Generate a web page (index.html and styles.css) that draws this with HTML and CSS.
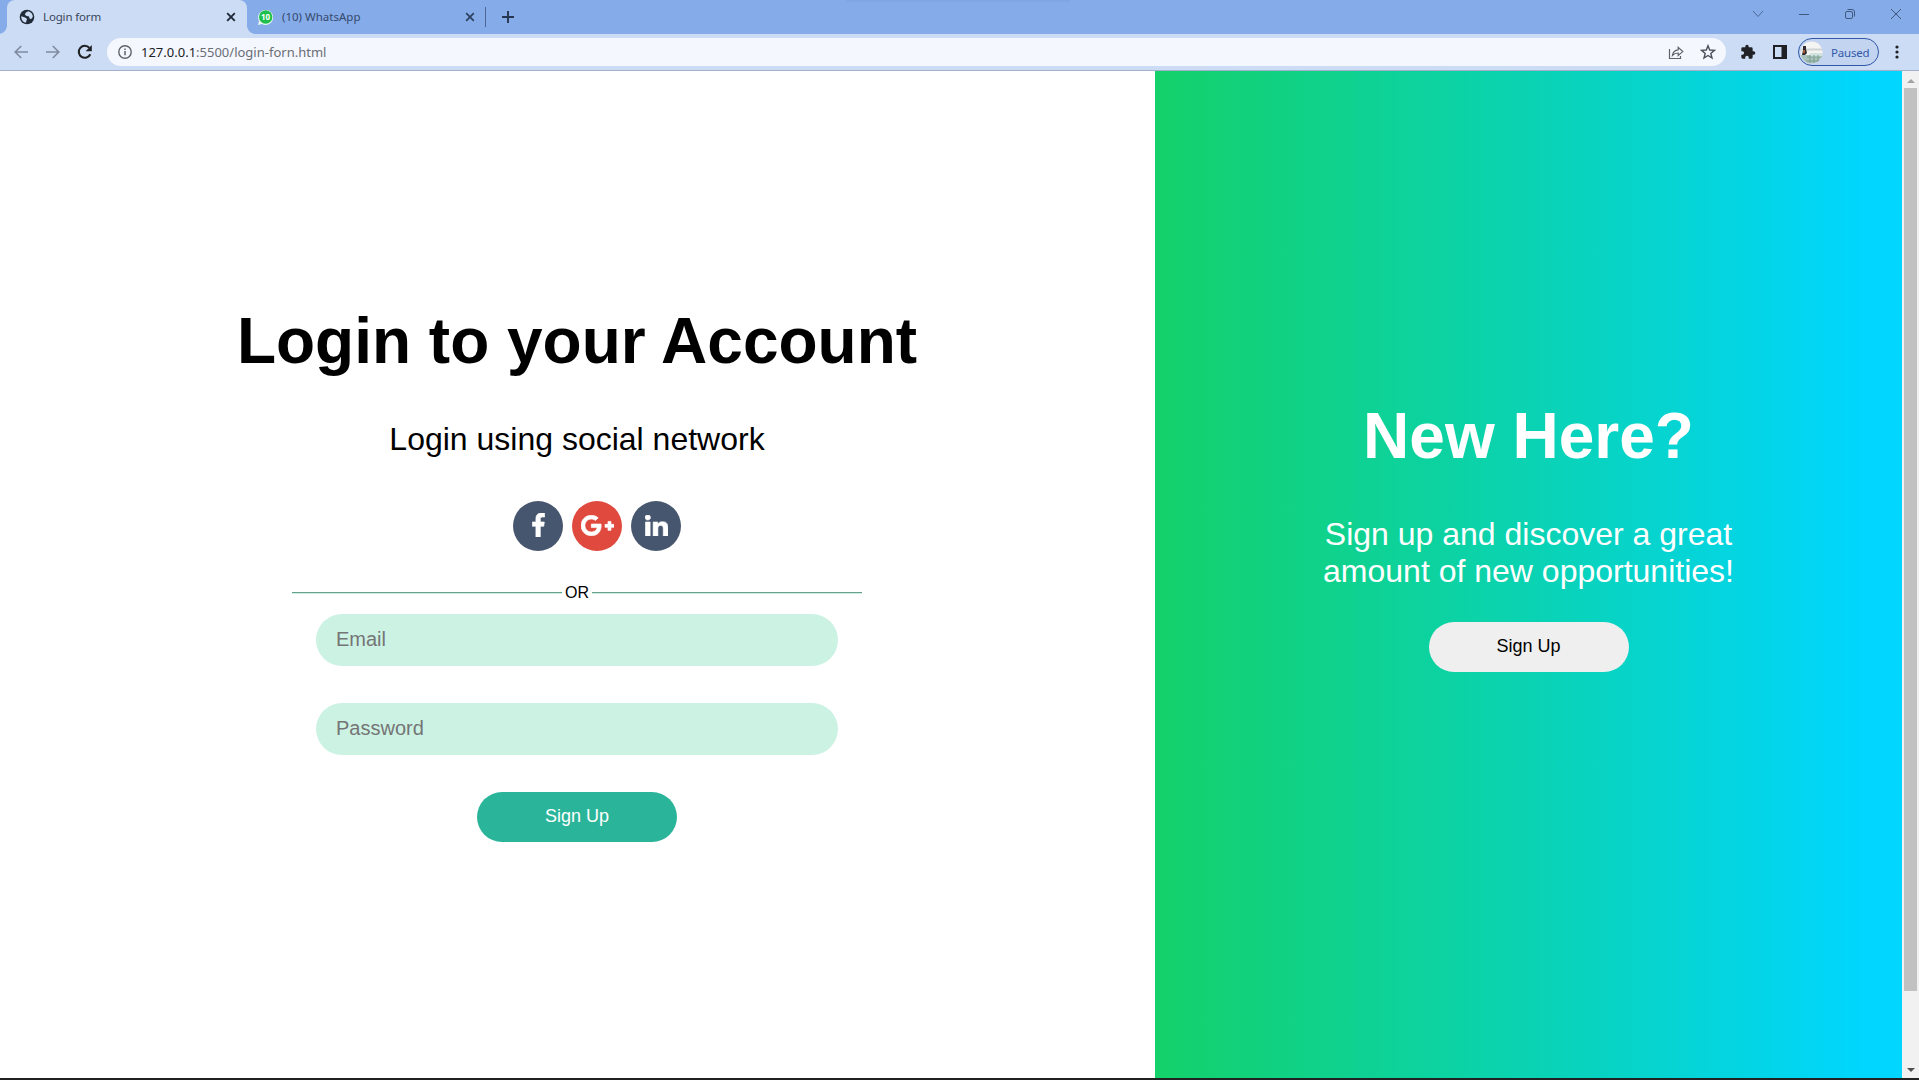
FILE: index.html
```html
<!DOCTYPE html>
<html lang="en">
<head>
<meta charset="utf-8">
<title>Login form</title>
<link rel="stylesheet" href="styles.css">
</head>
<body>
<div class="browser">
  <header class="tabstrip">
    <div class="tab tab-active">
      <svg class="favicon" width="16" height="16" viewBox="0 0 16 16"><circle cx="8" cy="8" r="7.3" fill="#202a38"/><path d="M2.2 7.2 5.5 8.2 8 9.7 7.2 12.8 6.8 13.8A6 6 0 0 1 2.2 7.2ZM7.2 3.3 9.5 2.2C12.3 3 14 5.5 13.8 8L12 10.3 10.6 9.6 10 7.6 7 6.8 5.8 5.2Z" fill="#ccdcf5"/></svg>
      <span class="tab-title title-login">Login form</span>
      <svg class="tab-close" width="10" height="10" viewBox="0 0 10 10"><path d="m1.2 1.2 7.6 7.6m0-7.6L1.2 8.8" stroke="#202a38" stroke-width="1.9"/></svg>
    </div>
    <div class="tab tab-idle">
      <svg class="favicon" width="17" height="17" viewBox="0 0 17 17"><path d="M1 16 2 12A7.5 7.5 0 1 1 5 15Z" fill="#e9f6f0"/><circle cx="8.7" cy="8" r="6.7" fill="#1fbf4d"/><text x="8.6" y="11" text-anchor="middle" class="badge-text">10</text></svg>
      <span class="tab-title title-wa">(10) WhatsApp</span>
      <svg class="tab-close" width="10" height="10" viewBox="0 0 10 10"><path d="m1.2 1.2 7.6 7.6m0-7.6L1.2 8.8" stroke="#2c405f" stroke-width="1.7"/></svg>
    </div>
    <span class="tab-divider"></span>
    <svg class="new-tab" width="12" height="12" viewBox="0 0 12 12"><path d="M6 0v12M0 6h12" stroke="#26364f" stroke-width="1.9"/></svg>
    <span class="top-shade"></span>
    <div class="window-controls">
      <svg width="12" height="12" viewBox="0 0 12 12"><path d="m1 3 5 5.5L11 3" fill="none" stroke="#4b6a99"/></svg>
      <svg width="12" height="12" viewBox="0 0 12 12"><path d="M1 6.5h10" stroke="#40597f"/></svg>
      <svg width="12" height="12" viewBox="0 0 12 12"><rect x="1.5" y="3.5" width="7" height="7" rx="1.5" fill="none" stroke="#40597f"/><path d="M3.5 1.5H8a2.5 2.5 0 0 1 2.5 2.5v4.5" fill="none" stroke="#40597f"/></svg>
      <svg width="12" height="12" viewBox="0 0 12 12"><path d="m1 1 10 10M11 1 1 11" stroke="#40597f"/></svg>
    </div>
  </header>
  <nav class="toolbar">
    <svg class="nav-icon" width="14" height="14" viewBox="0 0 14 14"><path d="M14 7H1.5M7.2 1 1.2 7l6 6" fill="none" stroke="#7f8a9e" stroke-width="1.6"/></svg>
    <svg class="nav-icon" width="14" height="14" viewBox="0 0 14 14"><path d="M0 7h12.5M6.8 1l6 6-6 6" fill="none" stroke="#7f8a9e" stroke-width="1.6"/></svg>
    <svg class="nav-icon reload" width="16" height="16" viewBox="0 0 16 16"><path d="M13.3 10.2A6 6 0 1 1 12.4 3.9" fill="none" stroke="#202124" stroke-width="2.1"/><path d="M14.8 1v6.2H8.6Z" fill="#202124"/></svg>
    <div class="address">
      <svg class="info" width="14" height="14" viewBox="0 0 14 14"><circle cx="7" cy="7" r="6.2" fill="none" stroke="#5f6368" stroke-width="1.4"/><path d="M7 6v4.3M7 3.5V5" stroke="#5f6368" stroke-width="1.5"/></svg>
      <span class="url"><span class="host">127.0.0.1</span>:5500/login-forn.html</span>
      <svg class="share" width="16" height="15" viewBox="0 0 16 15"><path d="M1.5 4v9.5h11V11M4.5 10.3C5 6.8 7 5 10.2 4.8V2.3L14.8 6.6 10.2 10.5V8C7.5 8 6 8.6 4.5 10.3Z" fill="none" stroke="#5f6368" stroke-width="1.2"/></svg>
      <svg class="star" width="16" height="16" viewBox="0 0 16 16"><path d="m8 1.7 1.7 4.3 4.7.4-3.6 3 1.2 4.6L8 11.5 4 14l1.2-4.6-3.6-3L6.300 6Z" fill="none" stroke="#4b5059" stroke-width="1.4"/></svg>
    </div>
    <svg class="puzzle" width="16" height="16" viewBox="0 0 24 24"><path fill="#202124" d="M20.5 11H19V7a2 2 0 0 0-2-2h-4V3.500a2.500 2.500 0 0 0-5 0V5H4a2 2 0 0 0-2 2v3.800h1.500a2.700 2.700 0 0 1 0 5.400H2V20a2 2 0 0 0 2 2h3.800v-1.500a2.700 2.700 0 0 1 5.400 0V22H17a2 2 0 0 0 2-2v-4h1.500a2.500 2.500 0 0 0 0-5z"/></svg>
    <svg class="panel-icon" width="14" height="14" viewBox="0 0 14 14"><path fill="#202124" fill-rule="evenodd" d="M0 0h14v14H0ZM2 2v10h6.500V2Z"/></svg>
    <div class="profile">
      <svg width="23" height="23" viewBox="0 0 23 23"><defs><clipPath id="avatar"><circle cx="11.5" cy="11.5" r="11"/></clipPath></defs><g clip-path="url(#avatar)"><path fill="#f4f4f3" d="M0 0h23v23H0z"/><path fill="#cfd3d3" d="M0 7.500h23v2H0z"/><path fill="#a9c2bd" d="M0 14h23v9H0z"/><path fill="#d2e2e0" d="M10 12h13v4H10z"/><path d="M7 16h15M6 20h16M10 14v8m4-8v8m4-8v8" stroke="#7ba08f" fill="none"/><path fill="#312a30" d="M3 5h3v3l1 4-2 2H2l1-5Z"/><path fill="#a65d39" d="M3 9h2v3H3z"/></g></svg>
      <span class="profile-text">Paused</span>
    </div>
    <svg class="menu" width="4" height="14" viewBox="0 0 4 14"><g fill="#202124"><circle cx="2" cy="2" r="1.6"/><circle cx="2" cy="7" r="1.6"/><circle cx="2" cy="12" r="1.6"/></g></svg>
  </nav>
  <div class="viewport">
    <main class="login">
      <h1>Login to your Account</h1>
      <p class="lead">Login using social network</p>
      <div class="socials">
        <a class="social"><svg width="13" height="24" viewBox="0 0 264 512"><path d="M76.7 512V283H0v-91h76.7v-71.7C76.7 42.4 124.3 0 193.8 0c33.3 0 61.9 2.5 70.2 3.6V85h-48.2c-37.8 0-45.1 18-45.1 44.3V192H256l-11.7 91h-73.6v229" stroke="#fff" stroke-width="14"/></svg></a>
        <a class="social google"><svg width="33" height="21" viewBox="12 64 616 384"><path stroke="#fff" stroke-width="12" d="M386.061 228.496c1.834 9.692 3.143 19.384 3.143 31.956C389.204 370.205 315.599 448 204.8 448c-106.084 0-192-85.915-192-192s85.916-192 192-192c51.864 0 95.083 18.859 128.611 50.292l-52.126 50.03c-14.145-13.621-39.028-29.599-76.485-29.599-65.484 0-118.92 54.221-118.92 121.277 0 67.056 53.436 121.277 118.92 121.277 75.961 0 104.513-54.745 108.965-82.773H204.8v-66.009h181.261zm185.406 6.437V179.2h-56.001v55.733h-55.733v56.001h55.733v55.733h56.001v-55.733H627.2v-56.001h-55.733z"/></svg></a>
        <a class="social"><svg class="linkedin" width="23" height="21" viewBox="0 0 448 448" preserveAspectRatio="none"><path stroke="#fff" stroke-width="12" d="M100.28 448H7.4V148.9h92.88zM53.79 108.1C24.09 108.1 0 83.5 0 53.8a53.79 53.79 0 0 1 107.58 0c0 29.7-24.1 54.3-53.79 54.3zM447.9 448h-92.68V302.4c0-34.7-.7-79.2-48.29-79.2-48.29 0-55.69 37.7-55.69 76.7V448h-92.78V148.9h89.08v40.8h1.3c12.4-23.5 42.69-48.3 87.88-48.3 94 0 111.28 61.9 111.28 142.3V448z"/></svg></a>
      </div>
      <div class="or"><span>OR</span></div>
      <form class="form">
        <input class="field" type="text" placeholder="Email">
        <input class="field" type="password" placeholder="Password">
        <button class="btn btn-primary" type="button">Sign Up</button>
      </form>
    </main>
    <aside class="promo">
      <h1>New Here?</h1>
      <p class="lead">Sign up and discover a great<br>amount of new opportunities!</p>
      <button class="btn btn-plain" type="button">Sign Up</button>
    </aside>
    <div class="scrollbar">
      <span class="arrow arrow-up"></span>
      <span class="thumb"></span>
      <span class="arrow arrow-down"></span>
    </div>
  </div>
</div>
</body>
</html>
```
FILE: styles.css
```css
* { box-sizing: border-box; }
body { margin: 0; font-family: "Liberation Sans", Arial, sans-serif; color: #000; background: #fff; }
svg { display: block; flex: none; }
h1, p { margin: 0; }

.browser { display: flex; flex-direction: column; width: 1919px; height: 1080px; overflow: hidden; border-bottom: 2px solid #202123; }

/* Tab strip */
.tabstrip { position: relative; display: flex; align-items: center; height: 34px; flex: none; padding-left: 7px; background: #85ace9; font-family: "Noto Sans", sans-serif; }
.tab { position: relative; display: flex; align-items: center; height: 34px; }
.tab-active { width: 240px; padding: 0 11px 0 12px; background: #ccdcf5; border-radius: 8px 8px 0 0; }
.tab-active::before, .tab-active::after { content: ""; position: absolute; bottom: 0; width: 8px; height: 8px; }
.tab-active::before { left: -8px; background: radial-gradient(circle at 0 0, transparent 7.5px, #ccdcf5 8px); }
.tab-active::after { right: -8px; background: radial-gradient(circle at 100% 0, transparent 7.5px, #ccdcf5 8px); }
.tab-idle { width: 238px; padding: 0 10px 0 10px; }
.tab-title { margin-left: 8px; font-size: 11.5px; line-height: 16px; letter-spacing: -0.15px; white-space: nowrap; color: #39465b; }
.title-wa { letter-spacing: 0; color: #35496c; }
.tab-close { margin-left: auto; }
.badge-text { font: bold 8px "Noto Sans", sans-serif; fill: #fff; }
.tab-divider { width: 1px; height: 20px; background: #4c6594; }
.new-tab { margin-left: 16px; }
.top-shade { position: absolute; left: 846px; top: 0; width: 224px; height: 3px; background: linear-gradient(#7ea4e1, #85ace9); }
.window-controls { display: flex; gap: 34px; margin: 0 17px 6px auto; }

/* Toolbar */
.toolbar { display: flex; align-items: center; height: 37px; flex: none; padding-left: 14px; background: #ccdcf5; border-bottom: 1px solid #a2b0c9; font-family: "Noto Sans", sans-serif; }
.nav-icon + .nav-icon { margin-left: 18px; }
.nav-icon.reload { margin-left: 17px; }
.address { display: flex; align-items: center; width: 1619px; height: 28px; margin-left: 14px; padding: 0 10px 0 11px; border-radius: 14px; background: #f4f7fd; }
.url { margin-left: 9px; font-size: 13px; line-height: 18px; color: #6a6e75; }
.host { color: #202124; }
.share { margin-left: auto; }
.star { margin-left: 16px; }
.puzzle { margin-left: 14px; }
.panel-icon { margin-left: 17px; }
.profile { display: flex; align-items: center; width: 81px; height: 28px; margin-left: 11px; padding-left: 1px; border: 1px solid #3058a6; border-radius: 14px; background: #c3d4f1; }
.profile-text { margin-left: 8px; font-size: 11.5px; letter-spacing: -0.2px; color: #3159a8; }
.menu { margin-left: 16px; }

/* Page */
.viewport { display: flex; flex: 1; min-height: 0; }
.login { display: flex; flex-direction: column; align-items: center; width: 1155px; padding: 233px 1px 0 0; background: #fff; }
h1 { font-size: 64px; line-height: 74px; }
.lead { margin-top: 43px; font-size: 32px; line-height: 37px; text-align: center; }
.socials { display: flex; gap: 9px; margin-top: 43px; padding-left: 40px; }
.social { display: flex; align-items: center; justify-content: center; width: 50px; height: 50px; border-radius: 50%; background: #47566f; }
.social svg { fill: #fff; margin-bottom: 2px; }
.social.google { background: #e0493e; }
.or { display: flex; align-items: center; gap: 3px; width: 570px; margin-top: 32px; font-size: 16px; line-height: 16px; }
.or span { padding-top: 2px; }
.or::before, .or::after { content: ""; flex: 1; height: 1px; background: #68a08c; box-shadow: 0 1px 0 #cdeee3; }
.form { display: flex; flex-direction: column; align-items: center; gap: 37px; margin-top: 13px; }
.field { width: 522px; height: 52px; padding: 0 20px 2px; border: 0; border-radius: 26px; background: #ccf2e4; font: 20px "Liberation Sans", Arial, sans-serif; }
.field::placeholder { color: #757575; }
.btn { width: 200px; height: 50px; padding: 0 0 1px; border: 0; border-radius: 25px; font: 18px "Liberation Sans", Arial, sans-serif; }
.btn-primary { background: #2ab59a; color: #fff; }

.promo { display: flex; flex-direction: column; align-items: center; width: 747px; padding-top: 328px; color: #fff; background: linear-gradient(90deg, #14d16a 0%, #09d3ba 55%, #00d6ff 95%); }
.btn-plain { margin-top: 32px; background: #efefef; color: #000; }

.scrollbar { display: flex; flex-direction: column; align-items: center; width: 17px; padding: 8px 0 6px; background: #f1f1f1; }
.arrow { border: solid transparent; border-width: 0 4px; }
.arrow-up { border-bottom: 4px solid #a3a3a3; }
.arrow-down { margin-top: auto; border-top: 4px solid #505050; }
.thumb { width: 13px; height: 903px; margin-top: 5px; background: #c1c1c1; }
```
